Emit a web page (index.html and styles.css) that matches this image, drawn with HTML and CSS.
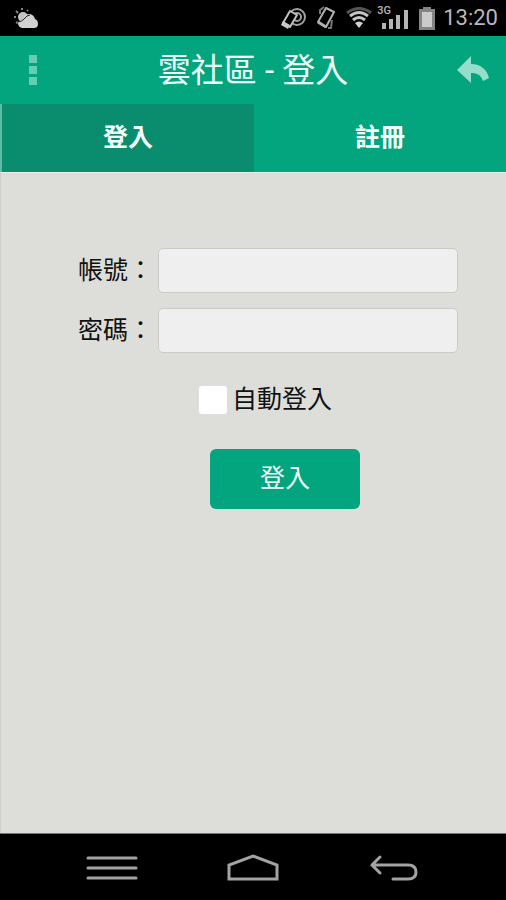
FILE: index.html
```html
<!DOCTYPE html>
<html lang="zh-Hant">
<head>
<meta charset="utf-8">
<meta name="viewport" content="width=device-width, initial-scale=1">
<title>雲社區 - 登入</title>
<link rel="stylesheet" href="styles.css">
</head>
<body>
<div class="status">
  <svg class="weather" width="26" height="24" viewBox="0 0 26 24" aria-hidden="true">
    <g stroke="#888" stroke-width="2"><path d="M8 2v2M2 5l2 2M0 11h2M2 17l2-1M14 4l-1 1"/></g>
    <circle cx="9" cy="11" r="5" fill="#c4c4c4"/>
    <path d="M8 22q-4-1-4-5 0-2 4-3 3-7 8-6 4 1 5 5 3 1 3 5 0 4-4 4z" fill="#d2d2d2"/>
    <path d="M3 16q5 0 7-3 3-4 6-4" fill="none" stroke="#222" stroke-width="1"/>
  </svg>
  <div class="status-right">
    <svg class="nfc" width="27" height="24" viewBox="0 0 27 24" fill="none" aria-hidden="true">
      <g stroke="#a0a0a0" stroke-width="2"><circle cx="17" cy="11" r="8"/><circle cx="17" cy="11" r="4"/></g>
      <path d="M10 5l7 4-7 12-7-4z" fill="#000" stroke="#c0c0c0" stroke-width="2" stroke-linejoin="round"/>
      <path d="M3 15l7 4-2 4-7-4z" fill="#c8c8c8"/>
    </svg>
    <svg class="rotate" width="22" height="26" viewBox="0 0 22 26" fill="none" stroke="#b0b0b0" stroke-linejoin="round" aria-hidden="true">
      <path d="M9 2L5 5v4M13 23h3l1-8" stroke="#777" stroke-width="2"/>
      <path d="M11 3l8 4-8 15-8-5z" stroke-width="2"/>
      <path d="M3 17l8 5" stroke-width="3"/>
    </svg>
    <svg class="wifi" width="28" height="22" viewBox="0 0 28 22" fill="none" aria-hidden="true">
      <path d="M2 6q12-9 24 0" stroke="#555" stroke-width="3"/>
      <path d="M5 9q9-7 18 0" stroke="#c4c4c4" stroke-width="3"/>
      <path d="M8 13q6-5 12 0" stroke="#c4c4c4" stroke-width="3"/>
      <path d="M10 16q4-3 8 0l-4 5z" fill="#d0d0d0"/>
    </svg>
    <div class="mobile">
      <span class="network">3G</span>
      <svg width="28" height="20" viewBox="0 0 28 20" fill="#b5b5b5" aria-hidden="true"><path d="M1 14h4v6H1zM8 10h4v10H8zM15 6h4v14h-4zM23 1h4v19h-4z"/></svg>
    </div>
    <svg class="battery" width="16" height="23" viewBox="0 0 16 23" aria-hidden="true">
      <path d="M4 0h8v2h4v21H0V2h4z" fill="#858585"/><path d="M3 5h10v15H3z" fill="#ccc"/>
    </svg>
    <time class="clock">13:20</time>
  </div>
</div>

<header class="bar">
  <button class="icon-button" type="button" aria-label="選單">
    <svg width="10" height="32" viewBox="0 0 10 32" fill="#64cdb2" aria-hidden="true"><path d="M1 1h8v8H1zM1 12h8v8H1zM1 23h8v8H1z"/></svg>
  </button>
  <h1 class="title">雲社區 - 登入</h1>
  <button class="icon-button" type="button" aria-label="返回">
    <svg width="34" height="28" viewBox="0 0 34 28" fill="#94decb" aria-hidden="true"><path d="M1 14L15 0v8c10 0 16 6 18 14l-6 3c-2-6-6-8-12-8v10z"/></svg>
  </button>
</header>

<nav class="tabs">
  <a class="tab tab-active" href="#login" aria-current="page">登入</a>
  <a class="tab" href="#register">註冊</a>
</nav>

<main class="content">
  <form class="form">
    <div class="field">
      <label for="account">帳號：</label>
      <input class="text-input" id="account" type="text">
    </div>
    <div class="field">
      <label for="password">密碼：</label>
      <input class="text-input" id="password" type="password">
    </div>
    <div class="remember">
      <input class="check" id="auto" type="checkbox">
      <label for="auto">自動登入</label>
    </div>
    <div class="actions">
      <button class="submit" type="submit">登入</button>
    </div>
  </form>
</main>

<footer class="system">
  <button class="system-button" type="button" aria-label="最近">
    <svg width="54" height="28" viewBox="0 0 54 28" fill="none" stroke="#a3a3a3" stroke-width="3" stroke-linecap="round" aria-hidden="true"><path d="M3 4h48M3 14h48M3 24h48"/></svg>
  </button>
  <button class="system-button" type="button" aria-label="主畫面">
    <svg width="54" height="28" viewBox="0 0 54 28" fill="none" stroke="#a3a3a3" stroke-width="3" aria-hidden="true"><path d="M3 25V11L27 2l24 9v14z"/></svg>
  </button>
  <button class="system-button" type="button" aria-label="上一頁">
    <svg width="54" height="28" viewBox="0 0 54 28" fill="none" stroke="#a3a3a3" stroke-width="3" stroke-linecap="round" aria-hidden="true"><path d="M14 3L6 11l8 8M6 11h36q8 0 8 7t-8 7H27"/></svg>
  </button>
</footer>
</body>
</html>
```
FILE: styles.css
```css
* {
  box-sizing: border-box;
}

body {
  margin: 0;
  min-height: 100vh;
  display: flex;
  flex-direction: column;
  background: #dddeda;
  color: #111;
  font: 25px/36px Roboto, "Noto Sans CJK TC", sans-serif;
}

button,
input {
  margin: 0;
  padding: 0;
  border: 0;
  font: inherit;
}

button {
  background: none;
  cursor: pointer;
}

svg {
  display: block;
  flex: none;
}

.status {
  display: flex;
  align-items: center;
  justify-content: space-between;
  height: 36px;
  padding: 0 8px 0 14px;
  background: #000;
  color: #b8b8b8;
}

.status-right {
  display: flex;
  align-items: center;
}

.rotate,
.wifi,
.clock {
  margin-left: 8px;
}

.mobile {
  position: relative;
  margin: 2px 10px 0 8px;
}

.network {
  position: absolute;
  top: -4px;
  left: -4px;
  font-size: 11px;
  line-height: 12px;
  font-weight: 500;
}

.clock {
  font-size: 22px;
}

.bar {
  display: flex;
  align-items: center;
  justify-content: space-between;
  height: 68px;
  padding: 0 16px;
  background: #03a57e;
}

.icon-button {
  display: flex;
  justify-content: center;
  width: 34px;
}

.title {
  margin: 0;
  padding-top: 2px;
  color: #eefffa;
  font-size: 33px;
  line-height: 48px;
  font-weight: 400;
}

.tabs {
  display: flex;
  background: #03a57e;
  border-left: 2px solid #5dbda3;
}

.tab {
  flex: 1;
  padding: 16px 0;
  color: #f4fffc;
  font-weight: 700;
  text-align: center;
  text-decoration: none;
}

.tab-active {
  background: #0a8c6f;
}

.content {
  flex: 1;
  border-left: 1px solid #cfd0cd;
  border-top: 1px solid #e8ece8;
}

.form {
  padding: 75px 48px 0 77px;
}

.field {
  display: flex;
  align-items: center;
  gap: 5px;
  margin-bottom: 15px;
}

.text-input {
  flex: 1;
  min-width: 0;
  height: 45px;
  padding: 0 8px;
  background: #efefef;
  border: 1px solid #cbccc9;
  border-radius: 5px;
}

.remember {
  display: flex;
  align-items: center;
  justify-content: center;
  gap: 5px;
  margin-top: 29px;
  padding-right: 5px;
}

.check {
  appearance: none;
  width: 28px;
  height: 28px;
  background: #fff;
  border-radius: 3px;
}

.check:checked {
  background: #03a57e;
}

.actions {
  display: flex;
  justify-content: center;
  margin-top: 31px;
  padding-left: 34px;
}

.submit {
  padding: 12px 50px;
  background: #03a57e;
  border-radius: 6px;
  color: #f4fffc;
}

.system {
  display: flex;
  align-items: center;
  justify-content: space-between;
  height: 67px;
  padding: 2px 86px 0 85px;
  background: #000;
  border-top: 1px solid #777;
}
```
